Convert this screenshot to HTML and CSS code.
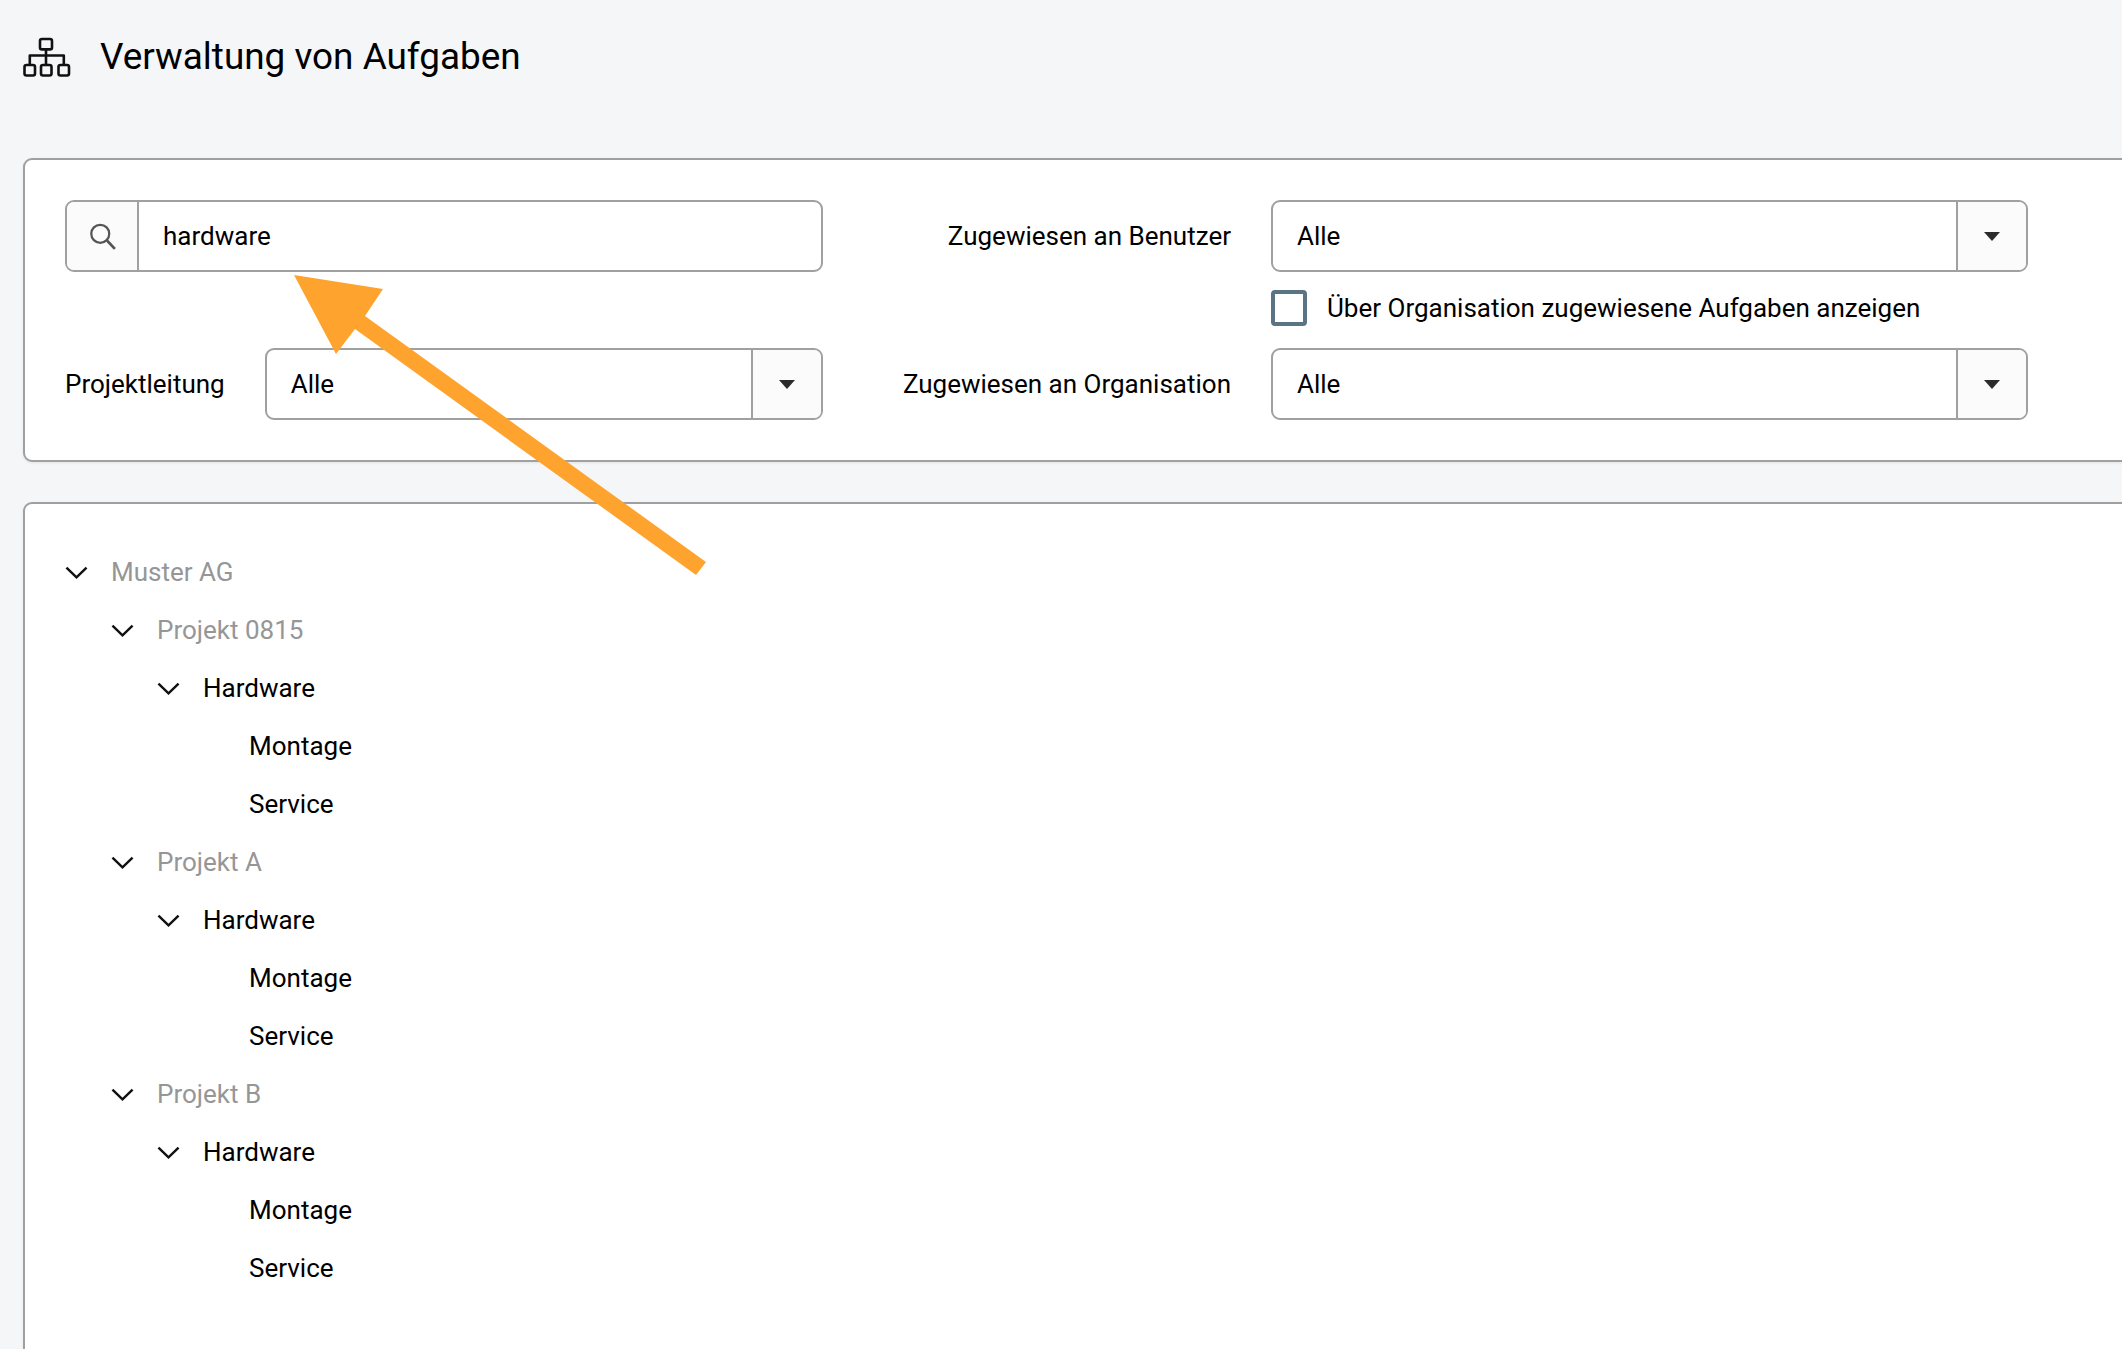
FILE: index.html
```html
<!DOCTYPE html>
<html lang="de">
<head>
<meta charset="utf-8">
<title>Verwaltung von Aufgaben</title>
<link rel="stylesheet" href="styles.css">
</head>
<body>
<header class="page-header">
  <svg class="header-icon" viewBox="0 0 48 40" aria-hidden="true">
    <g fill="none" stroke="#111" stroke-width="2.6" stroke-linejoin="round">
      <rect x="17" y="2" width="12" height="10.400" rx="2"/>
      <rect x="1.500" y="28" width="10.500" height="10.500" rx="2"/>
      <rect x="18" y="28" width="10.500" height="10.500" rx="2"/>
      <rect x="35.500" y="28" width="10.500" height="10.500" rx="2"/>
      <path d="M23 12.400V28M6.800 28V18.500H40.800V28"/>
    </g>
  </svg>
  <h1 class="page-title">Verwaltung von Aufgaben</h1>
</header>

<main class="content">
  <section class="card filter-card">
    <div class="search-field field">
      <span class="addon addon-left">
        <svg class="search-icon" viewBox="0 0 24 24" aria-hidden="true">
          <circle cx="10" cy="10" r="8" fill="none" stroke="#555" stroke-width="2"/>
          <path d="M16 16l7 7.500" fill="none" stroke="#555" stroke-width="2.400"/>
        </svg>
      </span>
      <span class="field-value">hardware</span>
    </div>

    <label class="field-label">Zugewiesen an Benutzer</label>
    <div class="field">
      <span class="field-value">Alle</span>
      <span class="addon addon-right"><span class="caret"></span></span>
    </div>

    <div class="checkbox-row">
      <span class="checkbox"></span>
      <span class="checkbox-label">Über Organisation zugewiesene Aufgaben anzeigen</span>
    </div>

    <div class="project-lead">
      <label class="lead-label">Projektleitung</label>
      <div class="field lead-field">
        <span class="field-value">Alle</span>
        <span class="addon addon-right"><span class="caret"></span></span>
      </div>
    </div>

    <label class="field-label">Zugewiesen an Organisation</label>
    <div class="field">
      <span class="field-value">Alle</span>
      <span class="addon addon-right"><span class="caret"></span></span>
    </div>
  </section>

  <section class="card tree-card">
    <ul class="tree">
      <li class="node muted"><svg class="chevron" viewBox="0 0 24 13"><path d="M1.500 1.500L12 11.500L22.500 1.500"/></svg>Muster AG</li>
      <li class="node muted level-1"><svg class="chevron" viewBox="0 0 24 13"><path d="M1.500 1.500L12 11.500L22.500 1.500"/></svg>Projekt 0815</li>
      <li class="node level-2"><svg class="chevron" viewBox="0 0 24 13"><path d="M1.500 1.500L12 11.500L22.500 1.500"/></svg>Hardware</li>
      <li class="node level-3">Montage</li>
      <li class="node level-3">Service</li>
      <li class="node muted level-1"><svg class="chevron" viewBox="0 0 24 13"><path d="M1.500 1.500L12 11.500L22.500 1.500"/></svg>Projekt A</li>
      <li class="node level-2"><svg class="chevron" viewBox="0 0 24 13"><path d="M1.500 1.500L12 11.500L22.500 1.500"/></svg>Hardware</li>
      <li class="node level-3">Montage</li>
      <li class="node level-3">Service</li>
      <li class="node muted level-1"><svg class="chevron" viewBox="0 0 24 13"><path d="M1.500 1.500L12 11.500L22.500 1.500"/></svg>Projekt B</li>
      <li class="node level-2"><svg class="chevron" viewBox="0 0 24 13"><path d="M1.500 1.500L12 11.500L22.500 1.500"/></svg>Hardware</li>
      <li class="node level-3">Montage</li>
      <li class="node level-3">Service</li>
    </ul>
  </section>
</main>

<svg class="annotation" viewBox="0 0 2122 1349" aria-hidden="true">
  <polygon points="294,275 383,289 365,316 706,562 696,575 355,329 336,354" fill="#ffa32f"/>
</svg>
</body>
</html>
```

FILE: styles.css
```css
* { box-sizing: border-box; }

html, body {
  margin: 0;
  height: 100%;
  overflow: hidden;
}

body {
  position: relative;
  background: #f5f6f8;
  color: #000;
  font-family: Roboto, "Liberation Sans", sans-serif;
  font-size: 26px;
  line-height: 36px;
}

.page-header {
  display: flex;
  align-items: center;
  gap: 29px;
  height: 114px;
  margin-bottom: 44px;
  padding-left: 23px;
}

.header-icon { width: 48px; height: 40px; flex: none; }

.page-title {
  margin: 0;
  font-size: 36.900px;
  font-weight: 400;
  line-height: 44px;
}

.content {
  display: flex;
  flex-direction: column;
  gap: 40px;
  margin: 0 -30px 0 23px;
}

.card {
  background: #fff;
  border: 2px solid #a0a0a0;
  border-radius: 9px;
  box-shadow: 0 1px 3px rgba(0, 0, 0, .08);
}

.filter-card {
  display: grid;
  grid-template-columns: 758px 368px 757px;
  grid-template-rows: 72px 76px 72px;
  column-gap: 40px;
  align-items: center;
  padding: 40px 40px;
  height: 304px;
}

.field {
  display: flex;
  align-items: stretch;
  height: 72px;
  background: #fff;
  border: 2px solid #a0a0a0;
  border-radius: 9px;
  overflow: hidden;
}

.field-value {
  flex: 1;
  align-self: center;
  padding-left: 24px;
}

.addon {
  display: flex;
  flex: none;
  align-items: center;
  justify-content: center;
  background: #fbfbfb;
}

.addon-left { width: 72px; border-right: 2px solid #a0a0a0; }
.addon-right { width: 70px; border-left: 2px solid #a0a0a0; }

.search-icon { width: 27px; height: 28px; }

.caret {
  width: 0;
  height: 0;
  border-left: 8px solid transparent;
  border-right: 8px solid transparent;
  border-top: 9px solid #2b2b2b;
}

.field-label {
  text-align: right;
  white-space: nowrap;
}

.checkbox-row {
  grid-column: 3;
  display: flex;
  align-items: center;
  gap: 20px;
  margin-top: -4px;
}

.checkbox {
  flex: none;
  width: 36px;
  height: 36px;
  background: #fff;
  border: 4px solid #5a7486;
  border-radius: 4px;
}

.project-lead {
  grid-column: 1;
  display: flex;
  align-items: center;
  gap: 40px;
}

.lead-label { flex: none; white-space: nowrap; }
.lead-field { flex: 1; }

.tree-card {
  height: 900px;
  padding: 39px 40px 0;
}

.tree {
  margin: 0;
  padding: 0;
  list-style: none;
}

.node {
  display: flex;
  align-items: center;
  height: 58px;
}

.muted { color: #969696; }
.level-1 { padding-left: 46px; }
.level-2 { padding-left: 92px; }
.level-3 { padding-left: 184px; }

.chevron {
  flex: none;
  width: 23px;
  height: 13px;
  margin-right: 23px;
}

.chevron path {
  fill: none;
  stroke: #111;
  stroke-width: 2.6;
}

.annotation {
  position: absolute;
  left: 0;
  top: 0;
  width: 2122px;
  height: 1349px;
  pointer-events: none;
}
```
